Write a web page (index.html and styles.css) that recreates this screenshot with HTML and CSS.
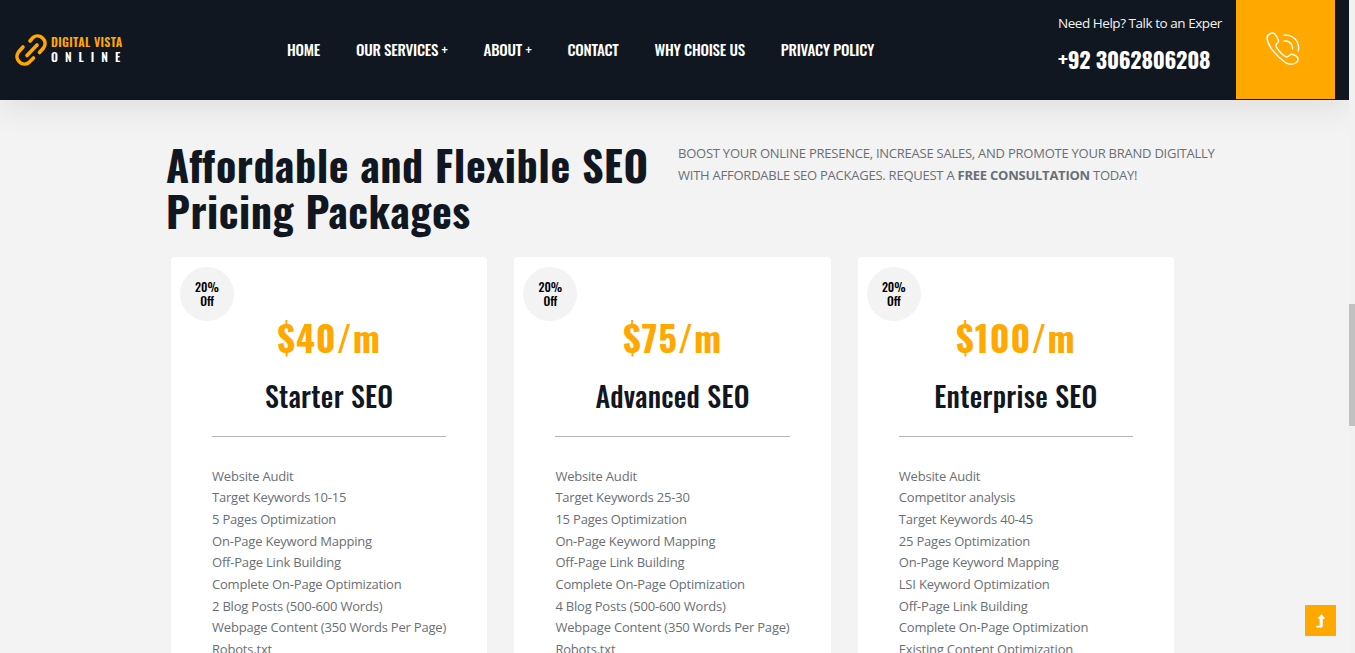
FILE: index.html
```html
<!DOCTYPE HTML>
<html>

<head>
    <meta charset='utf-8'>
    <title>SEO Pricing Packages</title>
    <link rel="stylesheet" href="styles.css">
</head>

<body>
    <div class="pageWrap">
        <div class="page">

            <!--header-->
            <header class="topBar">
                <div class="logo">
                    <svg class="logoIcon" viewBox="14 31 35 37" fill="none" stroke="#ffa800" stroke-width="3.6" stroke-linecap="round">
                        <path d="M30 40L33 36.500A7.500 7.500 0 0 1 43.500 47L39.500 51.500" />
                        <path d="M23 46L18.500 51A7.500 7.500 0 0 0 29 61.500L33.500 57" />
                        <path d="M27 54.500L37 44" />
                    </svg>
                    <div class="logoText">
                        <div class="logoTop">DIGITAL VISTA</div>
                        <div class="logoBottom">ONLINE</div>
                    </div>
                </div>
                <nav class="mainNav">
                    <a>HOME</a>
                    <a>OUR SERVICES <span class="plus">+</span></a>
                    <a>ABOUT <span class="plus">+</span></a>
                    <a>CONTACT</a>
                    <a>WHY CHOISE US</a>
                    <a>PRIVACY POLICY</a>
                </nav>
                <div class="helpBox">
                    <div class="helpText">Need Help? Talk to an Exper</div>
                    <div class="helpPhone">+92 3062806208</div>
                </div>
                <div class="callBox">
                    <svg class="callIcon" viewBox="0 0 36 36" width="38" height="38" fill="none" stroke="#fff" stroke-width="1.3" stroke-linecap="round" stroke-linejoin="round">
                        <path d="M6 3.500c-2 1-3.500 3-3 5.500 1.500 7 9 16 17 21.500 3 2 6.500 2.500 9.500 1 2-1 3.500-3 2.500-5-.7-1.400-3.500-3-5.500-3.500-1.500-.3-2.500 1-3.500 2-.7.7-1.500.7-2.500.2-3.500-2-7-6-9-9.500-.5-1-.4-1.700.4-2.400 1-1 2.200-2 1.800-3.600C13.200 8 11.500 5 10 3.500 8.800 2.500 7.300 2.800 6 3.500z" />
                        <path d="M19 5c6-1 12 3 13.500 9 .5 2 .4 4 0 6" />
                        <path d="M19 10.500c3-.5 6 1 7.500 4 .5 1.200.6 2.500.5 3.500" />
                    </svg>
                </div>
            </header>

            <!--intro-->
            <section class="intro">
                <h1 class="introTitle">Affordable and Flexible SEO Pricing Packages</h1>
                <p class="introText">BOOST YOUR ONLINE PRESENCE, INCREASE SALES, AND PROMOTE YOUR BRAND DIGITALLY WITH AFFORDABLE SEO PACKAGES. REQUEST A <b>FREE CONSULTATION</b> TODAY!</p>
            </section>

            <!--cards-->
            <section class="cards">
                <article class="card">
                    <div class="badge">20%<br>Off</div>
                    <div class="price">$40/m</div>
                    <h2 class="planName">Starter SEO</h2>
                    <ul class="features">
                        <li>Website Audit</li>
                        <li>Target Keywords 10-15</li>
                        <li>5 Pages Optimization</li>
                        <li>On-Page Keyword Mapping</li>
                        <li>Off-Page Link Building</li>
                        <li>Complete On-Page Optimization</li>
                        <li>2 Blog Posts (500-600 Words)</li>
                        <li>Webpage Content (350 Words Per Page)</li>
                        <li>Robots.txt</li>
                    </ul>
                </article>
                <article class="card">
                    <div class="badge">20%<br>Off</div>
                    <div class="price">$75/m</div>
                    <h2 class="planName">Advanced SEO</h2>
                    <ul class="features">
                        <li>Website Audit</li>
                        <li>Target Keywords 25-30</li>
                        <li>15 Pages Optimization</li>
                        <li>On-Page Keyword Mapping</li>
                        <li>Off-Page Link Building</li>
                        <li>Complete On-Page Optimization</li>
                        <li>4 Blog Posts (500-600 Words)</li>
                        <li>Webpage Content (350 Words Per Page)</li>
                        <li>Robots.txt</li>
                    </ul>
                </article>
                <article class="card">
                    <div class="badge">20%<br>Off</div>
                    <div class="price">$100/m</div>
                    <h2 class="planName">Enterprise SEO</h2>
                    <ul class="features">
                        <li>Website Audit</li>
                        <li>Competitor analysis</li>
                        <li>Target Keywords 40-45</li>
                        <li>25 Pages Optimization</li>
                        <li>On-Page Keyword Mapping</li>
                        <li>LSI Keyword Optimization</li>
                        <li>Off-Page Link Building</li>
                        <li>Complete On-Page Optimization</li>
                        <li>Existing Content Optimization</li>
                    </ul>
                </article>
            </section>
        </div>

        <!--scrollbar-->
        <div class="scrollTrack">
            <div class="scrollThumb"></div>
        </div>
    </div>

    <a class="toTop">
        <svg viewBox="0 0 10 12" width="12" height="14" fill="#fff">
            <path d="M5.500 0l3 4h-2v6.500a1 1 0 0 1-1 1H1v-1.500h2.800V4h-2z" />
        </svg>
    </a>
</body>

</html>
```

FILE: styles.css
```css
html,
body {
    margin: 0px;
    padding: 0px;
    height: 100%;
    overflow: hidden;
}

body {
    background-color: #f3f3f3;
    font-family: "Open Sans", sans-serif;
}

.pageWrap {
    display: flex;
    height: 653px;
    overflow: hidden;
}

.page {
    flex: 1 1 auto;
    min-width: 0px;
}

.scrollTrack {
    flex: 0 0 6px;
    background-color: #f1f1f1;
}

.scrollThumb {
    margin-top: 304px;
    height: 122px;
    background-color: #c1c1c1;
}

/* header */
.topBar {
    display: flex;
    align-items: center;
    height: 100px;
    padding-left: 14px;
    background-color: #111721;
    box-shadow: 0px 10px 30px rgba(0, 0, 0, 0.08);
}

.logo {
    display: flex;
    align-items: center;
    gap: 2px;
    width: 109px;
    flex: 0 0 auto;
}

.logoIcon {
    width: 35px;
    height: 37px;
    flex: 0 0 auto;
}

.logoText {
    margin-bottom: 2px;
    font-family: "Oswald", sans-serif;
    font-weight: 600;
    font-size: 12px;
    line-height: 15px;
}

.logoTop {
    color: #ffa800;
    letter-spacing: 0.350px;
    white-space: nowrap;
}

.logoBottom {
    color: #fff;
    letter-spacing: 7px;
}

.mainNav {
    display: flex;
    gap: 36px;
    margin-bottom: 2px;
    margin-left: 164px;
    flex: 0 0 auto;
}

.mainNav a {
    color: #fff;
    font-family: "Oswald", sans-serif;
    font-weight: 500;
    font-size: 15px;
    letter-spacing: -0.230px;
    white-space: nowrap;
}

.plus {
    font-weight: 400;
}

.helpBox {
    align-self: flex-start;
    margin-left: auto;
    padding-top: 14px;
    width: 178px;
    flex: 0 0 auto;
}

.helpText {
    color: #f2f2f2;
    font-size: 13.500px;
    line-height: 18px;
    letter-spacing: -0.460px;
    white-space: nowrap;
}

.helpPhone {
    margin-top: 7px;
    color: #fff;
    font-family: "Oswald", sans-serif;
    font-weight: 700;
    font-size: 22px;
    line-height: 40px;
    letter-spacing: -0.200px;
    white-space: nowrap;
}

.callBox {
    display: flex;
    align-items: center;
    justify-content: center;
    align-self: flex-start;
    width: 99px;
    height: 99px;
    margin-right: 14px;
    background-color: #ffa800;
}

.callIcon {
    margin-right: 6px;
    margin-bottom: 2px;
}

/* intro */
.intro {
    display: flex;
    gap: 26px;
    margin-left: 166px;
    padding-top: 41px;
}

.introTitle {
    width: 486px;
    flex: 0 0 auto;
    margin: 0px;
    color: #111721;
    font-family: "Oswald", sans-serif;
    font-weight: 700;
    font-size: 42px;
    line-height: 46px;
    letter-spacing: 0.550px;
}

.introText {
    width: 550px;
    margin: 0px;
    padding-top: 1px;
    color: #6a6f76;
    font-size: 13px;
    line-height: 22px;
    letter-spacing: -0.240px;
}

/* cards */
.cards {
    display: flex;
    gap: 27px;
    margin-top: 24px;
    margin-left: 171px;
}

.card {
    position: relative;
    box-sizing: border-box;
    width: 316.400px;
    height: 500px;
    padding: 0px 41px;
    border-radius: 4px;
    background-color: #fff;
}

.badge {
    position: absolute;
    top: 10px;
    left: 9px;
    box-sizing: border-box;
    width: 54px;
    height: 54px;
    padding-top: 13px;
    border-radius: 50%;
    background-color: #f3f3f3;
    color: #000;
    text-align: center;
    font-family: "Oswald", sans-serif;
    font-weight: 500;
    font-size: 12px;
    line-height: 14px;
}

.price {
    padding-top: 54px;
    color: #ffa800;
    text-align: center;
    font-family: "Oswald", sans-serif;
    font-weight: 700;
    font-size: 36px;
    line-height: 52px;
    letter-spacing: 1px;
}

.planName {
    margin: 12px 0px 0px;
    padding-bottom: 20px;
    border-bottom: 1px solid #b5b5b5;
    color: #111721;
    text-align: center;
    font-family: "Oswald", sans-serif;
    font-weight: 500;
    font-size: 28px;
    line-height: 41px;
    letter-spacing: 0.300px;
}

.features {
    margin: 28.500px 0px 0px;
    padding: 0px;
    list-style: none;
    color: #6a6f76;
    font-size: 13px;
    line-height: 21.670px;
    letter-spacing: -0.200px;
}

.features li {
    white-space: nowrap;
}

.toTop {
    position: fixed;
    left: 1305px;
    top: 605px;
    display: flex;
    align-items: center;
    justify-content: center;
    width: 31px;
    height: 31px;
    background-color: #ffa800;
}
```
